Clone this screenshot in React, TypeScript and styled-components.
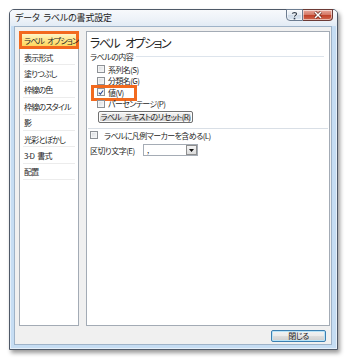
import React from "react";
import styled, { createGlobalStyle } from "styled-components";

const GlobalStyle = createGlobalStyle`
  html, body {
    margin: 0;
    padding: 0;
    background: #ffffff;
  }
  body {
    font-family: "Noto Sans CJK JP", "Noto Sans", sans-serif;
    font-feature-settings: "palt" 1;
    color: #262626;
  }
`;

const ORANGE = "#f26a1f";

const Stage = styled.div`
  box-sizing: border-box;
  width: 350px;
  height: 364px;
  padding: 9px 0 0 9px;
`;

const Window = styled.div`
  box-sizing: border-box;
  width: 329px;
  height: 341px;
  border: 1px solid #4f5968;
  border-radius: 5px 5px 0 0;
  background: #c6ddf3;
  box-shadow: inset 0 0 0 1px #e6f0fa, 2px 3px 4px rgba(0, 0, 0, 0.4);
  display: flex;
  flex-direction: column;
`;

const TitleBar = styled.div`
  height: 16px;
  flex: none;
  display: flex;
  align-items: center;
  padding-left: 5px;
  border-radius: 4px 4px 0 0;
  background: linear-gradient(180deg, #f7f9fc 0%, #edf2f8 60%, #e2ebf5 100%);
`;

const Title = styled.span`
  font-size: 9px;
  line-height: 12px;
  word-spacing: 2px;
  letter-spacing: -0.2px;
  color: #1a1a1a;
`;

const CaptionGroup = styled.div`
  margin-left: auto;
  margin-right: 4px;
  align-self: flex-start;
  margin-top: -1px;
  display: flex;
`;

const CaptionButton = styled.div<{ $close?: boolean }>`
  box-sizing: border-box;
  width: ${({ $close }) => ($close ? 30 : 17)}px;
  height: 12px;
  display: flex;
  align-items: center;
  justify-content: center;
  border: 1px solid ${({ $close }) => ($close ? "#6b3a35" : "#6c7c90")};
  border-left-width: ${({ $close }) => ($close ? 0 : 1)}px;
  border-radius: ${({ $close }) => ($close ? "0 0 4px 0" : "0 0 0 4px")};
  background: ${({ $close }) =>
    $close
      ? "linear-gradient(180deg, #e9a99c 0%, #d57a68 45%, #c0432b 55%, #d1674f 100%)"
      : "linear-gradient(180deg, #f6f8fb 0%, #e4ebf3 45%, #cfdbe8 55%, #dde7f2 100%)"};
  box-shadow: inset 0 0 0 1px rgba(255, 255, 255, 0.55);
`;

const Client = styled.div`
  flex: 1;
  margin: 0 5px 4px 4px;
  border: 1px solid #9fb3c8;
  background: #f0f0f0;
  display: flex;
  flex-direction: column;
  padding: 4px 1px 0 4px;
`;

const Body = styled.div`
  height: 295px;
  flex: none;
  display: flex;
  gap: 7px;
`;

const CategoryList = styled.div`
  box-sizing: border-box;
  width: 60px;
  border: 1px solid #a3abb5;
  background: #ffffff;
  display: flex;
  flex-direction: column;
`;

const CategoryItem = styled.div<{ $selected?: boolean }>`
  box-sizing: border-box;
  height: ${({ $selected }) => ($selected ? 18 : 16.4)}px;
  font-size: 8px;
  letter-spacing: -0.8px;
  word-spacing: 2px;
  display: flex;
  align-items: center;
  white-space: pre;
  padding-left: ${({ $selected }) => ($selected ? 2 : 4)}px;
  margin: ${({ $selected }) => ($selected ? "-1px -1px 0" : "0")};
  border: ${({ $selected }) => ($selected ? `3px solid ${ORANGE}` : "none")};
  background: ${({ $selected }) =>
    $selected
      ? "linear-gradient(180deg, #fff6c9 0%, #ffe68a 50%, #ffd85e 100%)"
      : "linear-gradient(#ececec, #ececec) no-repeat 3px 100% / calc(100% - 6px) 1px"};
`;

const OptionPanel = styled.div`
  box-sizing: border-box;
  width: 244px;
  border: 1px solid #a3abb5;
  background: #ffffff;
  padding: 4px 3px 0 3px;
  display: flex;
  flex-direction: column;
`;

const Heading = styled.div`
  height: 14px;
  font-size: 12px;
  line-height: 14px;
  letter-spacing: -1.6px;
  word-spacing: 5px;
  white-space: pre;
`;

const GroupHeader = styled.div`
  height: 12px;
  margin-top: 0.5px;
  display: flex;
  align-items: center;
  font-size: 8px;
  letter-spacing: -0.5px;
  white-space: nowrap;
  &::after {
    content: "";
    flex: 1;
    height: 1px;
    margin-left: 3px;
    margin-right: 2px;
    background: #dde4ec;
  }
`;

const CheckList = styled.div`
  display: flex;
  flex-direction: column;
  padding: 0.75px 0 0 7px;
`;

const CheckRow = styled.div`
  position: relative;
  height: 11.5px;
  display: flex;
  align-items: center;
  font-size: 8px;
  letter-spacing: -0.6px;
  white-space: nowrap;
`;

const RowLabel = styled.span<{ $gap?: number }>`
  margin-left: ${({ $gap }) => $gap ?? 0}px;
`;

const Box = styled.span<{ $checked?: boolean }>`
  box-sizing: border-box;
  width: 8px;
  height: 8px;
  flex: none;
  margin-right: 3px;
  border: 1px solid #8d9196;
  background: ${({ $checked }) =>
    $checked ? "#fbfbfb" : "linear-gradient(135deg, #d6d8db 0%, #eceef0 60%, #f6f7f8 100%)"};
  box-shadow: inset 0 0 0 1px #f4f4f4;
  display: flex;
  align-items: center;
  justify-content: center;
`;

const Annotation = styled.span`
  position: absolute;
  left: -6px;
  top: -1.75px;
  width: 46px;
  height: 16px;
  box-sizing: border-box;
  border: 3px solid ${ORANGE};
  pointer-events: none;
`;

const PushButton = styled.button<{ $width: number; $default?: boolean }>`
  box-sizing: border-box;
  width: ${({ $width }) => $width}px;
  height: 12px;
  padding: 0;
  font-family: inherit;
  font-feature-settings: "palt" 1;
  font-size: 8px;
  line-height: 10px;
  letter-spacing: -0.6px;
  word-spacing: 2.5px;
  color: #1a1a1a;
  border: 1px solid ${({ $default }) => ($default ? "#3c7fb1" : "#707070")};
  border-radius: 2px;
  background: linear-gradient(180deg, #f2f2f2 0%, #ebebeb 48%, #dddddd 52%, #cfcfcf 100%);
  box-shadow: inset 0 0 0 1px ${({ $default }) => ($default ? "#b9e3f7" : "#fcfcfc")};
  white-space: pre;
`;

const ResetButton = styled(PushButton)`
  margin: 2px 0 0 8px;
`;

const Separator = styled.div`
  height: 1px;
  margin: 5px -2px 0 -2px;
  background: #d9dfe6;
`;

const FieldRow = styled.div`
  margin-top: 2.5px;
  height: 14px;
  display: flex;
  align-items: center;
  font-size: 8px;
  letter-spacing: -0.5px;
  white-space: nowrap;
`;

const FieldLabel = styled.span`
  width: 53px;
`;

const Combo = styled.div`
  box-sizing: border-box;
  width: 55px;
  height: 12px;
  border: 1px solid #a5acb5;
  background: #ffffff;
  display: flex;
  align-items: center;
  padding-left: 3px;
  font-size: 8px;
`;

const ComboValue = styled.span`
  flex: 1;
  line-height: 10px;
`;

const ComboArrow = styled.span`
  box-sizing: border-box;
  width: 11px;
  height: 10px;
  border: 1px solid #8e8e8e;
  background: linear-gradient(180deg, #f4f4f4 0%, #dcdcdc 100%);
  display: flex;
  align-items: center;
  justify-content: center;
`;

const Footer = styled.div`
  flex: 1;
  display: flex;
  justify-content: flex-end;
  align-items: flex-start;
  padding: 4px 4px 0 0;
`;

const categories = [
  "ラベル オプション",
  "表示形式",
  "塗りつぶし",
  "枠線の色",
  "枠線のスタイル",
  "影",
  "光彩とぼかし",
  "3-D 書式",
  "配置",
];

const contents = [
  { label: "系列名(S)", checked: false },
  { label: "分類名(G)", checked: false },
  { label: "値(V)", checked: true },
  { label: "パーセンテージ(P)", checked: false },
];

const CheckMark = () => (
  <svg width="7" height="7" viewBox="0 0 7 7">
    <path d="M1 3.6 L2.8 5.4 L6 1.2" fill="none" stroke="#2a4a9a" strokeWidth="1.3" />
  </svg>
);

const App: React.FC = () => {
  return (
    <Stage>
      <GlobalStyle />
      <Window>
        <TitleBar>
          <Title>データ ラベルの書式設定</Title>
          <CaptionGroup>
            <CaptionButton>
              <svg width="7" height="9" viewBox="0 0 7 9">
                <path
                  d="M1.3 2.8 C1.3 1.2 5.7 1.2 5.7 2.8 C5.7 4.2 3.5 4.2 3.5 5.8"
                  fill="none"
                  stroke="#ffffff"
                  strokeWidth="2.4"
                />
                <path
                  d="M1.3 2.8 C1.3 1.2 5.7 1.2 5.7 2.8 C5.7 4.2 3.5 4.2 3.5 5.8"
                  fill="none"
                  stroke="#33404f"
                  strokeWidth="1.1"
                />
                <rect x="2.7" y="6.8" width="1.6" height="1.6" fill="#33404f" />
              </svg>
            </CaptionButton>
            <CaptionButton $close>
              <svg width="10" height="8" viewBox="0 0 10 8">
                <path d="M2 1 L8 7 M8 1 L2 7" stroke="#5a1e14" strokeWidth="2.8" />
                <path d="M2 1 L8 7 M8 1 L2 7" stroke="#ffffff" strokeWidth="1.6" />
              </svg>
            </CaptionButton>
          </CaptionGroup>
        </TitleBar>
        <Client>
          <Body>
            <CategoryList>
              {categories.map((c, i) => (
                <CategoryItem key={c} $selected={i === 0}>
                  {c}
                </CategoryItem>
              ))}
            </CategoryList>
            <OptionPanel>
              <Heading>ラベル オプション</Heading>
              <GroupHeader>ラベルの内容</GroupHeader>
              <CheckList>
                {contents.map((item) => (
                  <CheckRow key={item.label}>
                    <Box $checked={item.checked}>{item.checked && <CheckMark />}</Box>
                    {item.label}
                    {item.checked && <Annotation />}
                  </CheckRow>
                ))}
              </CheckList>
              <ResetButton $width={95}>ラベル テキストのリセット(R)</ResetButton>
              <Separator />
              <CheckRow>
                <Box />
                <RowLabel $gap={3}>ラベルに凡例マーカーを含める(L)</RowLabel>
              </CheckRow>
              <FieldRow>
                <FieldLabel>区切り文字(E)</FieldLabel>
                <Combo>
                  <ComboValue>,</ComboValue>
                  <ComboArrow>
                    <svg width="5" height="3" viewBox="0 0 5 3">
                      <path d="M0 0 H5 L2.5 3 Z" fill="#111" />
                    </svg>
                  </ComboArrow>
                </Combo>
              </FieldRow>
            </OptionPanel>
          </Body>
          <Footer>
            <PushButton $width={55} $default>
              閉じる
            </PushButton>
          </Footer>
        </Client>
      </Window>
    </Stage>
  );
};

export default App;
